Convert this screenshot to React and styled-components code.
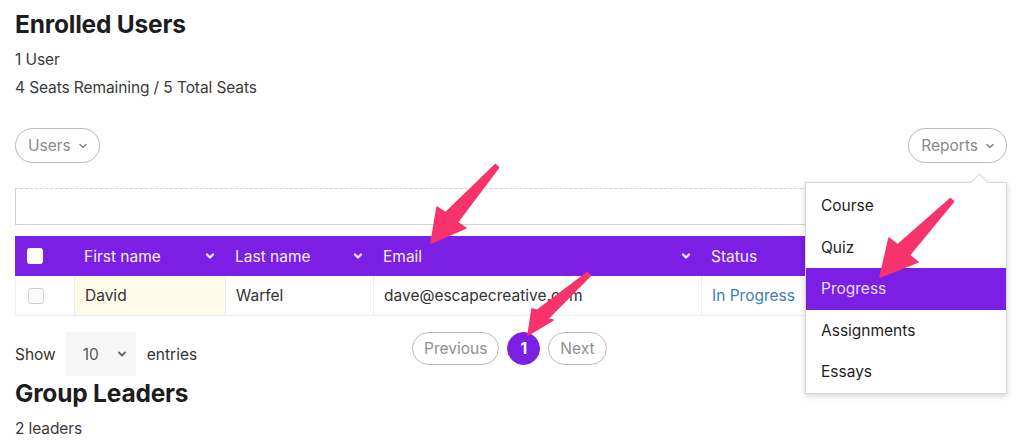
import React from "react";
import styled, { createGlobalStyle } from "styled-components";

const Global = createGlobalStyle`
  html, body { margin: 0; padding: 0; background: #fff; }
  body { font-family: Inter, "Noto Sans", "Liberation Sans", sans-serif; color: #333; }
  * { box-sizing: border-box; }
`;

const PURPLE = "#7b1fe4";
const FS = "15.5px";

const Page = styled.div`
  position: relative;
  width: 1024px;
  height: 448px;
  overflow: hidden;
  padding: 0 17px 0 15px;
`;

const Title = styled.h2`
  margin: 0;
  font-size: 24.5px;
  font-weight: 700;
  color: #1d1d1d;
  line-height: 28px;
  letter-spacing: -0.2px;
  padding-top: ${p => p.$top || 0}px;
`;

const Meta = styled.p`
  margin: 0;
  margin-top: ${p => p.$top || 0}px;
  font-size: ${FS};
  line-height: 28px;
  color: #3a3a3a;
  letter-spacing: -0.1px;
`;

const Toolbar = styled.div`
  display: flex;
  justify-content: space-between;
  align-items: center;
  margin-top: 26px;
`;

const PillButton = styled.button`
  display: inline-flex;
  align-items: center;
  gap: 7px;
  height: 35px;
  padding: 0 11px 0 12px;
  border: 1px solid #b9b9b9;
  border-radius: 18px;
  background: #fff;
  color: #8a8a8a;
  font-family: inherit;
  font-size: ${FS};
`;

const MenuWrap = styled.div`
  position: relative;
`;

const Menu = styled.ul`
  position: absolute;
  top: 54px;
  right: 0;
  width: 202px;
  margin: 0;
  padding: 2px 0 0;
  list-style: none;
  background: #fff;
  border: 1px solid #d8d8d8;
  box-shadow: 0 2px 6px rgba(0, 0, 0, 0.18);
  z-index: 5;
  &::before {
    content: "";
    position: absolute;
    top: -7px;
    right: 20px;
    width: 12px;
    height: 12px;
    background: #fff;
    border-left: 1px solid #d8d8d8;
    border-top: 1px solid #d8d8d8;
    transform: rotate(45deg);
  }
`;

const MenuItem = styled.li`
  position: relative;
  height: 41.5px;
  display: flex;
  align-items: center;
  padding-left: 15px;
  font-size: ${FS};
  color: ${p => (p.$active ? "#eadcff" : "#1e1e1e")};
  background: ${p => (p.$active ? PURPLE : "transparent")};
`;

const Search = styled.div`
  height: 37px;
  margin-top: 25px;
  border: 1px solid #d2d2d2;
  border-top-style: dashed;
`;

const Table = styled.div`
  margin-top: 11px;
  display: grid;
  grid-template-columns: 59px 151px 148px 328px 1fr;
`;

const HeadCell = styled.div`
  height: 40px;
  background: ${PURPLE};
  color: #f3ecff;
  font-size: ${FS};
  display: flex;
  align-items: center;
  justify-content: space-between;
  padding: 0 10px 0 10px;
`;

const Cell = styled.div`
  height: 40px;
  display: flex;
  align-items: center;
  padding: 0 10px;
  font-size: ${FS};
  color: ${p => (p.$link ? "#3d7cb8" : "#333")};
  background: ${p => (p.$hl ? "#fdfae7" : "#fff")};
  border-bottom: 1px solid #ececec;
  border-left: ${p => (p.$first ? "1px solid #f0f0f0" : "1px solid #ececec")};
`;

const Box = styled.span`
  width: 16px;
  height: 16px;
  border-radius: 3px;
  margin-left: 2px;
  background: ${p => (p.$light ? "#fff" : "#fafafa")};
  border: ${p => (p.$light ? "none" : "1px solid #cfcfcf")};
`;

const Footer = styled.div`
  display: flex;
  align-items: center;
  margin-top: 16px;
  height: 44px;
`;

const Length = styled.div`
  display: flex;
  align-items: center;
  font-size: ${FS};
  color: #333;
  width: 397px;
`;

const Select = styled.div`
  width: 70px;
  height: 44px;
  margin: 0 11px 0 10px;
  background: #f6f6f6;
  display: flex;
  align-items: center;
  justify-content: space-between;
  padding: 0 9px 0 17px;
  color: #555;
`;

const Pager = styled.div`
  display: flex;
  align-items: center;
  gap: 8px;
  margin-top: -12px;
`;

const PageBtn = styled.span`
  height: 33px;
  display: inline-flex;
  align-items: center;
  justify-content: center;
  border-radius: 17px;
  font-size: ${FS};
  padding: 0 ${p => (p.$current ? 0 : 11)}px;
  width: ${p => (p.$current ? "33px" : "auto")};
  border: 1px solid ${p => (p.$current ? PURPLE : "#b9b9b9")};
  background: ${p => (p.$current ? PURPLE : "#fff")};
  color: ${p => (p.$current ? "#fff" : "#8f8f8f")};
  font-weight: ${p => (p.$current ? 700 : 400)};
`;

const Arrows = styled.svg`
  position: absolute;
  left: 0;
  top: 0;
  pointer-events: none;
  z-index: 10;
`;

const Chevron = ({ color = "#888", size = 10, w = 1.6 }) => (
  <svg width={size} height={size} viewBox="0 0 10 10">
    <path d="M2 3.5 L5 6.5 L8 3.5" fill="none" stroke={color} strokeWidth={w} strokeLinecap="round" strokeLinejoin="round" />
  </svg>
);

const Arrow = ({ tail, tip, l, r }) => {
  const [tx, ty] = tail;
  const [px, py] = tip;
  const dx = px - tx, dy = py - ty;
  const len = Math.hypot(dx, dy);
  const nx = -dy / len, ny = dx / len;
  const bx = (l[0] + r[0]) / 2, by = (l[1] + r[1]) / 2;
  const hw1 = 2.2, hw2 = 5;
  const pts = [
    [tx + nx * hw1, ty + ny * hw1],
    [bx + nx * hw2 + (l[0] - bx) * 0.15, by + ny * hw2 + (l[1] - by) * 0.15],
    l,
    tip,
    r,
    [bx - nx * hw2 + (r[0] - bx) * 0.15, by - ny * hw2 + (r[1] - by) * 0.15],
    [tx - nx * hw1, ty - ny * hw1],
  ];
  return (
    <polygon
      points={pts.map(p => p.join(",")).join(" ")}
      fill="#f7336b"
      stroke="#f7336b"
      strokeWidth="1.5"
      strokeLinejoin="round"
    />
  );
};

export default function App() {
  return (
    <Page>
      <Global />
      <Title $top={10}>Enrolled Users</Title>
      <Meta $top={8}>1 User</Meta>
      <Meta>4 Seats Remaining / 5 Total Seats</Meta>

      <Toolbar>
        <PillButton>
          Users <Chevron />
        </PillButton>
        <MenuWrap>
          <PillButton>
            Reports <Chevron />
          </PillButton>
          <Menu>
            <MenuItem>Course</MenuItem>
            <MenuItem>Quiz</MenuItem>
            <MenuItem $active>Progress</MenuItem>
            <MenuItem>Assignments</MenuItem>
            <MenuItem>Essays</MenuItem>
          </Menu>
        </MenuWrap>
      </Toolbar>

      <Search />

      <Table>
        <HeadCell>
          <Box $light />
        </HeadCell>
        <HeadCell>
          First name <Chevron color="#f3ecff" w={2.2} />
        </HeadCell>
        <HeadCell>
          Last name <Chevron color="#f3ecff" w={2.2} />
        </HeadCell>
        <HeadCell>
          Email <Chevron color="#f3ecff" w={2.2} />
        </HeadCell>
        <HeadCell>Status</HeadCell>

        <Cell $first>
          <Box />
        </Cell>
        <Cell $hl>David</Cell>
        <Cell>Warfel</Cell>
        <Cell>dave@escapecreative.com</Cell>
        <Cell $link>In Progress</Cell>
      </Table>

      <Footer>
        <Length>
          Show
          <Select>
            10 <Chevron color="#666" w={1.8} />
          </Select>
          entries
        </Length>
        <Pager>
          <PageBtn>Previous</PageBtn>
          <PageBtn $current>1</PageBtn>
          <PageBtn>Next</PageBtn>
        </Pager>
      </Footer>

      <Title $top={3}>Group Leaders</Title>
      <Meta $top={8}>2 leaders</Meta>

      <Arrows width="1024" height="448" viewBox="0 0 1024 448">
        <Arrow tail={[497, 166]} tip={[431, 243]} l={[437, 207]} r={[466, 228]} />
        <Arrow tail={[589, 274]} tip={[528, 335]} l={[532, 309]} r={[553, 320]} />
        <Arrow tail={[952, 200]} tip={[880, 277]} l={[889, 238]} r={[918, 262]} />
      </Arrows>
    </Page>
  );
}
